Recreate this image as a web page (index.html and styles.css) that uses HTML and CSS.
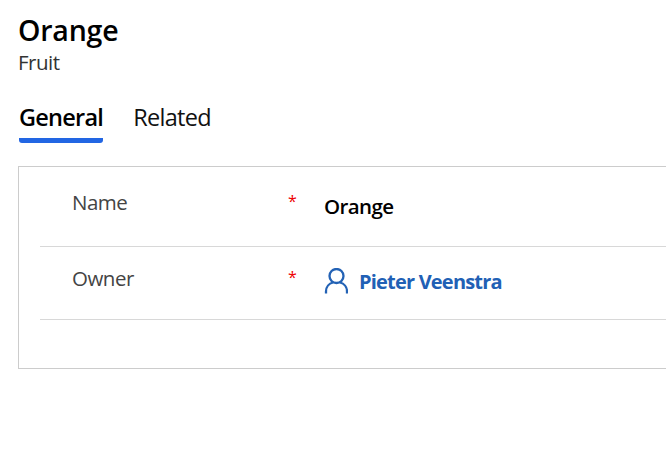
FILE: index.html
```html
<!DOCTYPE html>
<html lang="en">
<head>
<meta charset="utf-8">
<title>Orange - Fruit</title>
<link rel="stylesheet" href="styles.css">
</head>
<body>
<header class="head">
  <h1 class="title">Orange</h1>
  <div class="entity">Fruit</div>
</header>
<nav class="tabs">
  <span class="tab tab-active">General</span>
  <span class="tab">Related</span>
</nav>
<section class="card">
  <div class="row row-name">
    <span class="label">Name</span>
    <span class="req">*</span>
    <span class="value">Orange</span>
  </div>
  <div class="row row-owner">
    <span class="label">Owner</span>
    <span class="req">*</span>
    <span class="owner">
      <svg class="icon" width="24" height="26" viewBox="0 0 24 26" fill="none" stroke="#2362b5" stroke-width="2.300"><circle cx="12.500" cy="8" r="7"/><path d="M2 25.500v-2c0-4.500 3-8 7-9M23 25.500v-2c0-4.500-3-8-7-9"/></svg>
      <a class="link">Pieter Veenstra</a>
    </span>
  </div>
</section>
</body>
</html>
```
FILE: styles.css
```css
html, body { margin: 0; padding: 0; background: #fff; }
body { width: 666px; height: 453px; overflow: hidden; font-family: "Open Sans", "Noto Sans", sans-serif; }
.head { padding: 12px 0 0 18px; }
.title { margin: 0; font-size: 28.5px; line-height: 36px; font-weight: 600; color: #000; letter-spacing: -0.2px; }
.entity { font-size: 20.500px; line-height: 28px; font-weight: 400; color: #333; letter-spacing: -0.5px; }
.tabs { display: flex; gap: 30px; margin: 24px 0 0 19px; height: 67px; }
.tab { font-size: 23.500px; line-height: 34px; color: #111; letter-spacing: -0.7px; height: 38px; }
.tab-active { font-weight: 600; color: #000; letter-spacing: -0.75px; border-bottom: 5px solid #2266e3; border-radius: 0 0 3px 3px; }
.card { width: 700px; height: 201px; border: 1px solid #ccc; margin-top: -1px; margin-left: 18px; padding-left: 21px; }
.row { display: flex; border-bottom: 1px solid #d8d8d8; }
.row-name { height: 79px; }
.row-owner { height: 72px; }
.label { width: 216px; padding-left: 32px; font-size: 20.500px; line-height: 26px; margin-top: 22px; color: #444; letter-spacing: -0.5px; }
.row-owner .label { margin-top: 18px; }
.req { width: 36px; font-size: 16px; color: #e00; line-height: 20px; margin-top: 24px; }
.row-owner .req { margin-top: 20px; }
.value { font-size: 20.500px; line-height: 26px; margin-top: 26px; font-weight: 600; color: #000; letter-spacing: -0.6px; }
.owner { display: flex; align-items: center; gap: 11px; height: 30px; margin-top: 19px; }
.link { font-size: 20px; font-weight: 700; color: #2160b5; letter-spacing: -0.8px; }
```
